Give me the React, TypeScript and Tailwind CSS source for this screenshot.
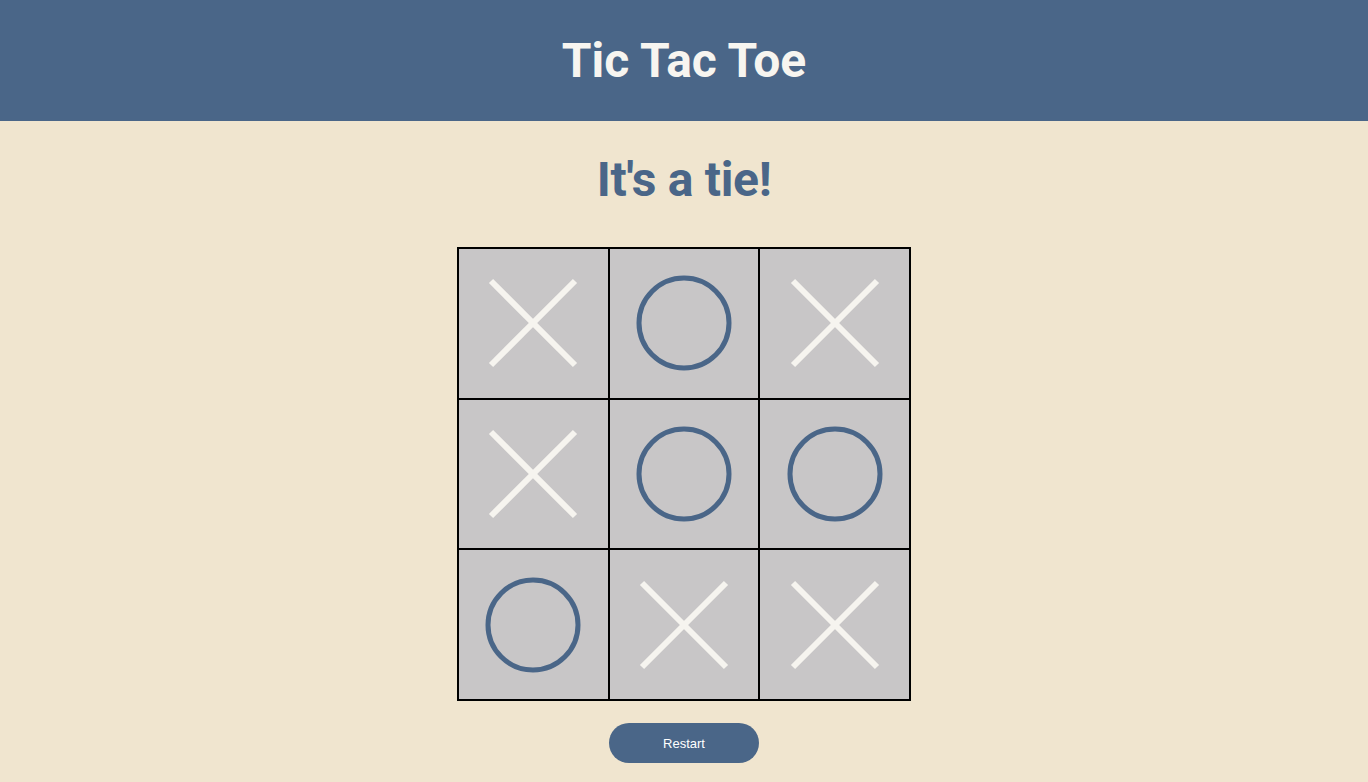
import React from "react";

type Mark = "X" | "O";

const board: Mark[] = ["X", "O", "X", "X", "O", "O", "O", "X", "X"];

function XMark() {
  return (
    <svg width="92" height="92" viewBox="0 0 92 92">
      <line x1="4" y1="4" x2="88" y2="88" stroke="#f6f4ef" strokeWidth="6" />
      <line x1="88" y1="4" x2="4" y2="88" stroke="#f6f4ef" strokeWidth="6" />
    </svg>
  );
}

function OMark() {
  return (
    <svg width="96" height="96" viewBox="0 0 96 96">
      <circle cx="48" cy="48" r="45" fill="none" stroke="#4a6688" strokeWidth="5" />
    </svg>
  );
}

export default function App() {
  return (
    <div
      className="min-h-[782px] bg-[#f0e5cf] flex flex-col items-center"
      style={{ fontFamily: "Roboto, 'Liberation Sans', sans-serif" }}
    >
      <header className="w-full h-[121px] bg-[#4a6688] flex items-center justify-center">
        <h1 className="text-[48px] leading-none font-bold text-[#f7f5f0]">Tic Tac Toe</h1>
      </header>
      <h2 className="mt-[34px] text-[48px] leading-[50px] font-bold text-[#4a6688] tracking-[-0.3px]">It's a tie!</h2>
      <div className="mt-[42px] w-[454px] h-[454px] bg-black p-[2px] grid grid-cols-3 grid-rows-3 gap-[2px]">
        {board.map((m, i) => (
          <div key={i} className="bg-[#c8c6c7] flex items-center justify-center">
            {m === "X" ? <XMark /> : <OMark />}
          </div>
        ))}
      </div>
      <button
        className="mt-[22px] w-[150px] h-[40px] rounded-full bg-[#4a6688] text-white text-[13px] pt-[2px]"
        style={{ fontFamily: "'Liberation Sans', Arial, sans-serif" }}
      >
        Restart
      </button>
    </div>
  );
}
